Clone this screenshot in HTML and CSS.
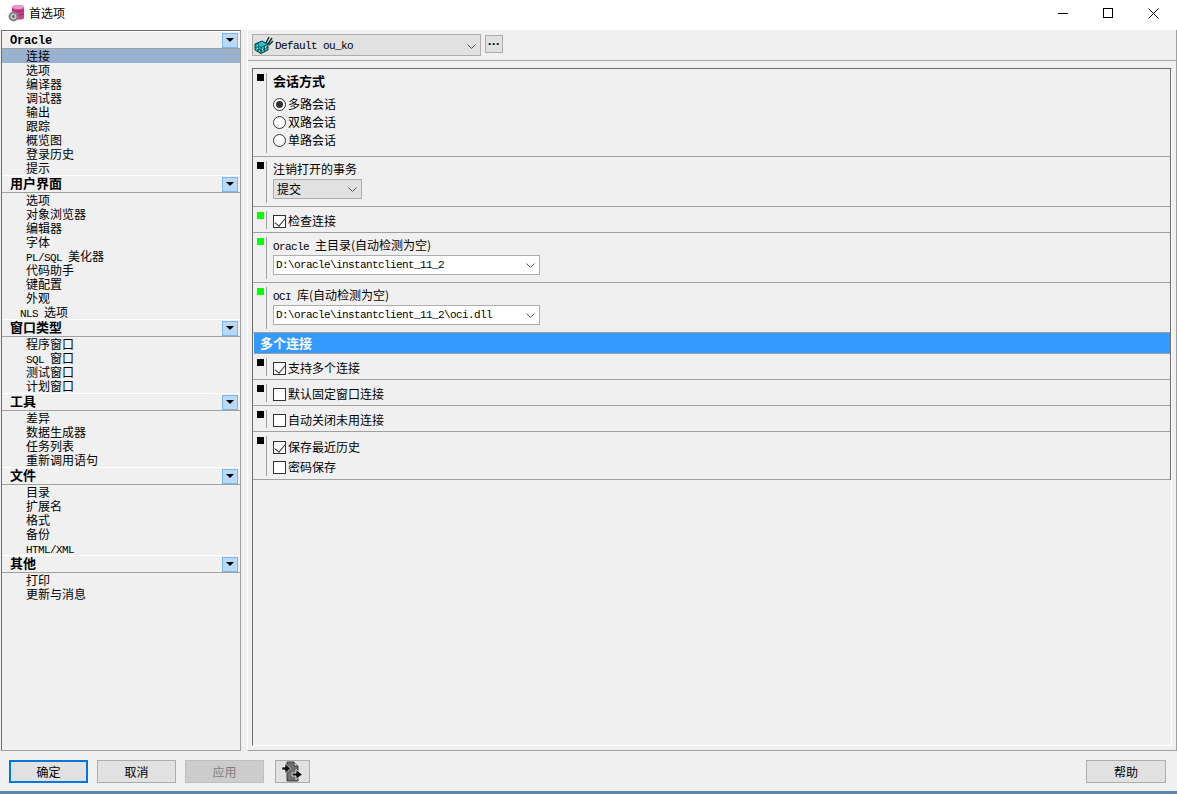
FILE: index.html
```html
<!DOCTYPE html>
<html lang="zh">
<head>
<meta charset="utf-8">
<title>首选项</title>
<link rel="stylesheet" href="styles.css">
</head>
<body>
<div class="window">
  <header class="titlebar">
    <div class="title">
      <svg class="app-icon" width="18" height="18" viewBox="0 0 18 18">
        <path d="M4 3C4 .8 16 .8 16 3V14C16 16.200 4 16.200 4 14Z" fill="#c9408f"/>
        <ellipse cx="10" cy="3" rx="6" ry="2" fill="#ea9ac8"/>
        <path d="M4 6.500q6 2.400 12 0M4 10q6 2.400 12 0" fill="none" stroke="#8e2468" stroke-width=".8"/>
        <circle cx="5.500" cy="12.500" r="5" fill="#8b8b8b"/>
        <circle cx="5.500" cy="12.500" r="3.400" fill="#cfcfcf" stroke="#555" stroke-width=".6"/>
        <circle cx="5.500" cy="12.500" r="1.400" fill="#666"/>
      </svg>
      <span>首选项</span>
    </div>
    <div class="win-controls">
      <svg width="10" height="10" viewBox="0 0 10 10"><path d="M0 5.500H10" stroke="#000"/></svg>
      <svg width="10" height="10" viewBox="0 0 10 10"><rect x=".5" y=".5" width="9" height="9" fill="none" stroke="#000"/></svg>
      <svg width="11" height="11" viewBox="0 0 11 11"><path d="M.5 .5L10.500 10.500M10.500 .5L.5 10.500" stroke="#000" fill="none"/></svg>
    </div>
  </header>

  <main class="content">
    <nav class="sidebar">
      <section>
        <h2 class="group-head mono-bold"><span>Oracle</span><i class="group-btn"></i></h2>
        <ul class="items">
          <li class="selected">连接</li><li>选项</li><li>编译器</li><li>调试器</li><li>输出</li><li>跟踪</li><li>概览图</li><li>登录历史</li><li>提示</li>
        </ul>
      </section>
      <section>
        <h2 class="group-head"><span>用户界面</span><i class="group-btn"></i></h2>
        <ul class="items">
          <li>选项</li><li>对象浏览器</li><li>编辑器</li><li>字体</li><li><span class="mono">PL/SQL </span>美化器</li><li>代码助手</li><li>键配置</li><li>外观</li><li class="outdent"><span class="mono">NLS </span>选项</li>
        </ul>
      </section>
      <section>
        <h2 class="group-head"><span>窗口类型</span><i class="group-btn"></i></h2>
        <ul class="items">
          <li>程序窗口</li><li><span class="mono">SQL </span>窗口</li><li>测试窗口</li><li>计划窗口</li>
        </ul>
      </section>
      <section>
        <h2 class="group-head"><span>工具</span><i class="group-btn"></i></h2>
        <ul class="items">
          <li>差异</li><li>数据生成器</li><li>任务列表</li><li>重新调用语句</li>
        </ul>
      </section>
      <section>
        <h2 class="group-head"><span>文件</span><i class="group-btn"></i></h2>
        <ul class="items">
          <li>目录</li><li>扩展名</li><li>格式</li><li>备份</li><li><span class="mono">HTML/XML</span></li>
        </ul>
      </section>
      <section>
        <h2 class="group-head"><span>其他</span><i class="group-btn"></i></h2>
        <ul class="items">
          <li>打印</li><li>更新与消息</li>
        </ul>
      </section>
    </nav>

    <div class="main-pane">
      <div class="profile-bar">
        <div class="select profile-select">
          <svg width="20" height="18" viewBox="0 0 20 18">
            <path d="M1 8L8 5L14 8V14L7 17.500L1 14Z" fill="#27c4c9" stroke="#0b3a3d"/>
            <path d="M1 8L7 11.500V17.500M7 11.500L14 8M4 6.500V15.500M10.500 9.500V15.500M1 11L7 14.500L14 11" fill="none" stroke="#0b3a3d" stroke-width=".8"/>
            <path d="M12 7L15 1M14 8L18 2M15 9L19 5" stroke="#12303a" stroke-width="1.400" fill="none"/>
            <path d="M3 9l1 1M8 13l1 1M11 11l1 1M3 12l1 1" stroke="#dff" fill="none"/>
          </svg>
          <span class="mono value">Default ou_ko</span>
          <svg class="chev" width="9" height="5" viewBox="0 0 9 5"><path d="M.5 .5L4.500 4.500L8.500 .5" fill="none" stroke="#555"/></svg>
        </div>
        <button class="dots">···</button>
      </div>

      <div class="pref-frame">
        <div class="pref-list">
          <div class="row">
            <i class="marker"></i>
            <div class="row-body session">
              <div class="row-title">会话方式</div>
              <label class="opt"><i class="radio on"></i>多路会话</label>
              <label class="opt"><i class="radio"></i>双路会话</label>
              <label class="opt"><i class="radio"></i>单路会话</label>
            </div>
          </div>
          <div class="row">
            <i class="marker"></i>
            <div class="row-body field">
              <div class="lbl">注销打开的事务</div>
              <div class="select commit-select"><span>提交</span>
                <svg class="chev" width="9" height="5" viewBox="0 0 9 5"><path d="M.5 .5L4.500 4.500L8.500 .5" fill="none" stroke="#555"/></svg>
              </div>
            </div>
          </div>
          <div class="row">
            <i class="marker green"></i>
            <div class="row-body single"><label class="opt"><i class="check on"></i>检查连接</label></div>
          </div>
          <div class="row">
            <i class="marker green"></i>
            <div class="row-body field">
              <div class="lbl"><span class="mono">Oracle </span>主目录(自动检测为空)</div>
              <div class="select input-select"><span class="mono value">D:\oracle\instantclient_11_2</span>
                <svg class="chev" width="9" height="5" viewBox="0 0 9 5"><path d="M.5 .5L4.500 4.500L8.500 .5" fill="none" stroke="#555"/></svg>
              </div>
            </div>
          </div>
          <div class="row">
            <i class="marker green"></i>
            <div class="row-body field">
              <div class="lbl"><span class="mono">OCI </span>库(自动检测为空)</div>
              <div class="select input-select"><span class="mono value">D:\oracle\instantclient_11_2\oci.dll</span>
                <svg class="chev" width="9" height="5" viewBox="0 0 9 5"><path d="M.5 .5L4.500 4.500L8.500 .5" fill="none" stroke="#555"/></svg>
              </div>
            </div>
          </div>
          <div class="band">多个连接</div>
          <div class="row">
            <i class="marker"></i>
            <div class="row-body single"><label class="opt"><i class="check on"></i>支持多个连接</label></div>
          </div>
          <div class="row">
            <i class="marker"></i>
            <div class="row-body single"><label class="opt"><i class="check"></i>默认固定窗口连接</label></div>
          </div>
          <div class="row">
            <i class="marker"></i>
            <div class="row-body single"><label class="opt"><i class="check"></i>自动关闭未用连接</label></div>
          </div>
          <div class="row">
            <i class="marker"></i>
            <div class="row-body history">
              <label class="opt"><i class="check on"></i>保存最近历史</label>
              <label class="opt"><i class="check"></i>密码保存</label>
            </div>
          </div>
        </div>
      </div>
    </div>
  </main>

  <footer class="actions">
    <button class="btn primary">确定</button>
    <button class="btn">取消</button>
    <button class="btn disabled">应用</button>
    <button class="btn icon-btn">
      <svg width="21" height="21" viewBox="0 0 21 21">
        <path d="M5 1H12L16 5V20H5Z" fill="#707070" stroke="#3c3c3c"/>
        <path d="M12 1V5H16" fill="#d8d8d8" stroke="#3c3c3c"/>
        <path d="M0 6H3V2.500L8.500 7.500L3 12.500V9H0Z" fill="#111" stroke="#fff" stroke-width=".6"/>
        <path d="M10 12H14V8.500L20.500 13.500L14 18.500V15H10Z" fill="#111" stroke="#fff" stroke-width=".8"/>
      </svg>
    </button>
    <button class="btn help">帮助</button>
  </footer>
</div>
</body>
</html>
```
FILE: styles.css
```css
* { box-sizing: border-box; }
html, body { margin: 0; height: 100%; }
body {
  background: #f0f0f0;
  color: #000;
  font: 12px/14px "Noto Sans CJK SC", "Liberation Sans", sans-serif;
  overflow: hidden;
}
.mono {
  font-family: "Liberation Mono", "Noto Sans CJK SC", monospace;
  font-size: 11px;
  letter-spacing: -.6px;
}
.window {
  width: 1177px;
  height: 794px;
  display: flex;
  flex-direction: column;
  border-bottom: 3px solid #5b87ad;
}
.titlebar {
  height: 30px;
  flex: none;
  background: #fff;
  display: flex;
  justify-content: space-between;
  align-items: center;
  padding-bottom: 4px;
}
.title { display: flex; align-items: center; gap: 3px; padding-left: 8px; }
.app-icon { display: block; }
.win-controls { display: flex; align-items: center; gap: 35px; padding-right: 18px; }
.win-controls svg { display: block; }

.content { flex: 1; display: flex; min-height: 0; padding-bottom: 9px; }
.sidebar {
  width: 240px;
  margin-left: 1px;
  flex: none;
  border: 1px solid #a0a0a0;
  border-top-color: #6d6d6d;
  border-left-color: #6d6d6d;
}
.group-head {
  margin: 0;
  height: 18px;
  display: flex;
  justify-content: space-between;
  align-items: center;
  padding: 0 2px 0 8px;
  font: bold 13px/14px "Noto Sans CJK SC", sans-serif;
  background: #f0f0f0;
  border-top: 1px solid #fff;
  border-bottom: 1px solid #a0a0a0;
}
.group-head span { margin-top: -2px; }
.mono-bold span {
  font-family: "Liberation Mono", monospace;
  font-size: 12px;
  letter-spacing: -.2px;
  font-weight: bold;
  margin-top: 2px;
}
.group-btn {
  width: 16px;
  height: 15px;
  background: #b9daf7;
  border: 1px solid #7db7ea;
  display: flex;
  align-items: center;
  justify-content: center;
}
.group-btn::after {
  content: "";
  border-left: 4px solid transparent;
  border-right: 4px solid transparent;
  border-top: 4px solid #000;
}
.items { list-style: none; margin: 0; padding: 0; }
.items li { height: 14px; line-height: 14px; padding-left: 24px; white-space: nowrap; }
.items li.selected { background: #98b2d0; }
.items li.outdent { padding-left: 18px; }

.main-pane {
  flex: 1;
  min-width: 0;
  margin-left: 6px;
  display: flex;
  flex-direction: column;
  padding-top: 4px;
  border-left: 1px solid #fff;
  border-right: 1px solid #a0a0a0;
  border-bottom: 1px solid #a0a0a0;
}
.profile-bar {
  height: 27px;
  padding-left: 4px;
  flex: none;
  display: flex;
  gap: 4px;
  align-items: flex-start;
  border-bottom: 1px solid #a8a8a8;
}
.select {
  background: #e1e1e1;
  border: 1px solid #adadad;
  display: flex;
  align-items: center;
  position: relative;
}
.select .chev { position: absolute; right: 4px; top: 7px; }
.profile-select { width: 229px; height: 22px; padding-left: 1px; gap: 1px; }
.profile-select .value { margin-top: 2px; }
.profile-select .chev { top: 9px; }
.value { line-height: 14px; }
.dots {
  width: 18px;
  height: 18px;
  margin-top: 1px;
  padding: 0;
  background: #e1e1e1;
  border: 1px solid #adadad;
  font: bold 12px/12px "Liberation Sans", sans-serif;
}

.pref-frame {
  flex: 1;
  margin: 7px 4px 4px;
  border: 1px solid #fff;
  border-left-color: #6d6d6d;
  border-top-color: #6d6d6d;
}
.pref-list { border-right: 1px solid #6d6d6d; }
.row {
  display: flex;
  align-items: flex-start;
  border-bottom: 1px solid #a0a0a0;
  padding: 4px 0 3px 4px;
}
.marker {
  flex: none;
  width: 7px;
  height: 7px;
  background: #000;
  margin-top: 1px;
}
.marker.green { background: #00ff00; }
.row-body {
  flex: 1;
  margin-left: 2px;
  padding-left: 6px;
  border-left: 1px solid #a0a0a0;
}
.session { height: 80px; }
.row-title { font-weight: bold; font-size: 13px; line-height: 16px; margin-bottom: 6px; }
.opt { display: flex; align-items: center; height: 18px; gap: 2px; }
.radio, .check {
  flex: none;
  width: 13px;
  height: 13px;
  background: #fff;
  border: 1px solid #333;
  position: relative;
}
.radio { border-radius: 50%; }
.radio.on::after {
  content: "";
  position: absolute;
  left: 2px;
  top: 2px;
  width: 7px;
  height: 7px;
  border-radius: 50%;
  background: #333;
}
.check.on::after {
  content: "";
  position: absolute;
  left: 3px;
  top: 0;
  width: 5px;
  height: 9px;
  border: solid #333;
  border-width: 0 1px 1px 0;
  transform: rotate(40deg);
}
.field { height: 42px; }
.lbl { height: 16px; line-height: 16px; }
.commit-select { width: 89px; height: 20px; margin-top: 2px; padding-left: 3px; }
.single { height: 18px; padding-top: 2px; }
.single .opt { height: 16px; }
.input-select { width: 267px; height: 20px; margin-top: 2px; background: #fff; padding-left: 2px; }
.band {
  height: 21px;
  background: #3399ff;
  color: #fff;
  font-weight: bold;
  font-size: 13px;
  line-height: 20px;
  padding-left: 6px;
  border-bottom: 1px solid #a0a0a0;
  margin-left: 1px;
}
.history { height: 40px; padding-top: 1px; }
.history .opt { height: 20px; }

.actions {
  flex: none;
  height: 31px;
  display: flex;
  align-items: flex-start;
  gap: 9px;
  padding: 0 11px 0 9px;
}
.btn {
  width: 79px;
  height: 23px;
  background: #e1e1e1;
  border: 1px solid #adadad;
  padding: 0;
  font: 12px/14px "Noto Sans CJK SC", sans-serif;
  color: #000;
}
.btn.primary { border: 2px solid #0078d7; }
.btn.disabled { background: #cccccc; border-color: #bfbfbf; color: #7f7f7f; }
.icon-btn { width: 35px; margin-left: 2px; display: flex; align-items: center; justify-content: center; }
.help { margin-left: auto; width: 80px; }
```
